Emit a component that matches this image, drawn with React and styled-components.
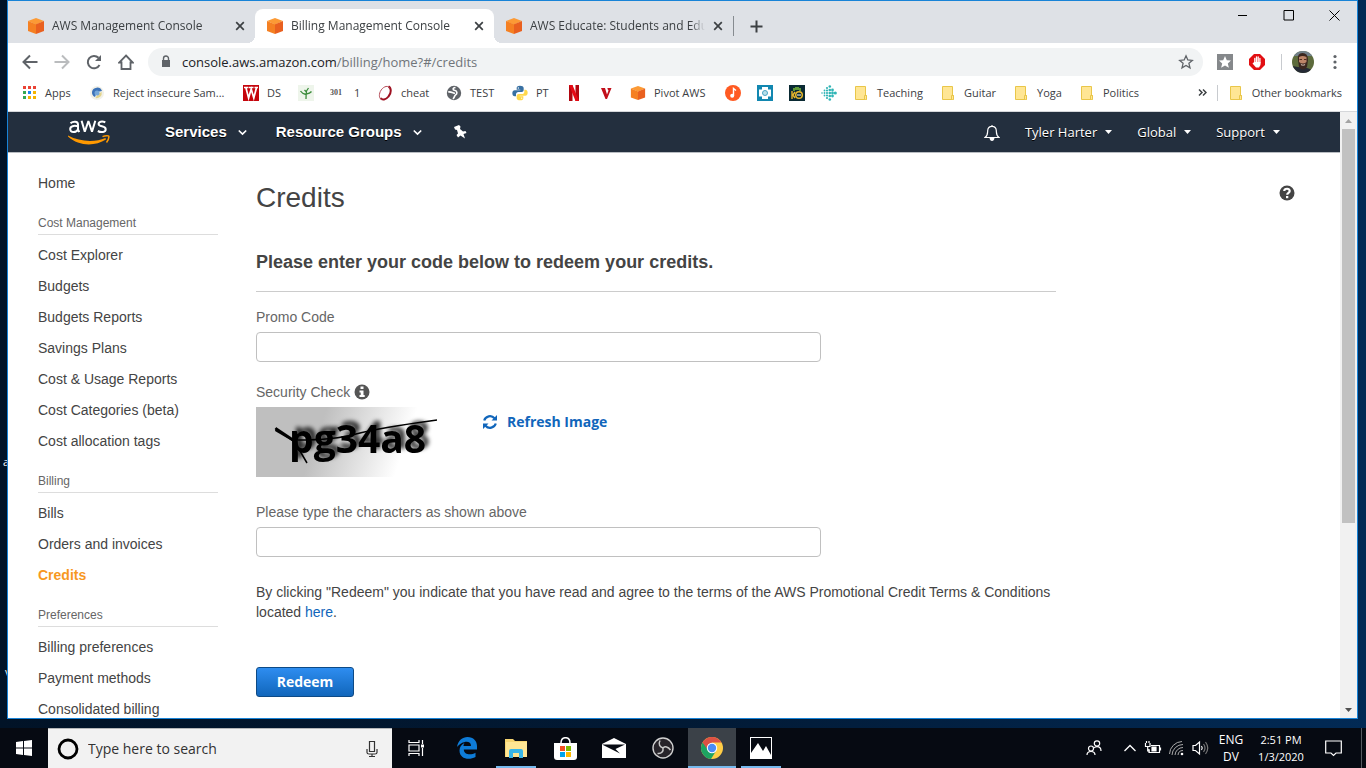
import React from 'react';
import styled, { createGlobalStyle } from 'styled-components';

const ui = '"Open Sans", "Noto Sans", sans-serif';
const arial = '"Liberation Sans", Arial, sans-serif';

const Global = createGlobalStyle`
  *, *::before, *::after { box-sizing: border-box; }
  body { margin: 0; font-family: ${arial}; color: #444; }
  button { border: 0; background: none; padding: 0; font: inherit; color: inherit; cursor: pointer; }
  a { color: inherit; text-decoration: none; }
  svg { display: block; flex: none; }
  h1, h2, ul, p { margin: 0; padding: 0; }
  ul { list-style: none; }
`;

const Desktop = styled.div`
  height: 100vh;
  display: flex;
  flex-direction: column;
  position: relative;
  background: linear-gradient(90deg, #011327, #021a35 50%, #022a55 100%);
`;

const DesktopLabel = styled.span`
  position: absolute;
  left: ${p => p.$left}px;
  top: ${p => p.$top}px;
  font: 11px/16px ${ui};
  color: #fff;
`;

const BrowserWindow = styled.section`
  flex: 1;
  min-height: 0;
  margin: 0 8px 9px 7px;
  border: 1px solid #1883d7;
  background: #fff;
  display: flex;
  flex-direction: column;
  position: relative;
`;

const TabStrip = styled.div`
  height: 42px;
  flex: none;
  display: flex;
  align-items: flex-end;
  background: #dee1e6;
  padding-left: 8px;
`;

const Tab = styled.div`
  position: relative;
  width: 239px;
  height: 34px;
  display: flex;
  align-items: center;
  gap: 7px;
  padding: 0 9px 0 11px;
  font: 12px/16px ${ui};
  color: #3c4043;
  border-radius: 8px 8px 0 0;
  background: ${p => (p.$active ? '#fff' : 'transparent')};
  &::before, &::after {
    content: '';
    display: ${p => (p.$active ? 'block' : 'none')};
    position: absolute;
    bottom: 0;
    width: 8px;
    height: 8px;
  }
  &::before { left: -8px; background: radial-gradient(circle at 0 0, #dee1e6 8px, #fff 8px); }
  &::after { right: -8px; background: radial-gradient(circle at 100% 0, #dee1e6 8px, #fff 8px); }
`;

const TabTitle = styled.span`
  flex: 1;
  min-width: 0;
  overflow: hidden;
  white-space: nowrap;
  mask-image: linear-gradient(90deg, #000 calc(100% - 14px), transparent);
`;

const NewTab = styled.button`
  height: 20px;
  margin: 0 0 7px 0;
  padding-left: 16px;
  border-left: 1px solid #868b90;
`;

const WindowButtons = styled.div`
  display: flex;
  align-self: flex-start;
  margin-left: auto;
  button { width: 46px; height: 28px; display: grid; place-items: center; }
`;

const Toolbar = styled.div`
  height: 37px;
  flex: none;
  display: flex;
  align-items: center;
  padding: 0 14px;
  gap: 16px;
  color: #5f6368;
`;

const Address = styled.div`
  flex: 1;
  height: 28px;
  margin: 0 -2px;
  border-radius: 14px;
  background: #f1f3f4;
  display: flex;
  align-items: center;
  gap: 8px;
  padding: 0 9px 0 10px;
  font: 13px/20px ${ui};
  color: #202124;
  span { flex: 1; }
  i { font-style: normal; color: #70757a; }
  button { color: #5f6368; }
`;

const Profile = styled.div`
  display: flex;
  align-items: center;
  gap: 13px;
  margin-left: -6px;
`;

const Divider = styled.span`
  width: 1px;
  height: 16px;
  background: #c8cbcf;
`;

const Bookmarks = styled.nav`
  height: 32px;
  flex: none;
  display: flex;
  align-items: center;
  padding: 0 15px 6px 13px;
  border-bottom: 1px solid #d5d7da;
  font: 11px/16px ${ui};
  color: #3c4043;
`;

const Bookmark = styled.a`
  flex: none;
  width: ${p => (p.$width ? p.$width + 'px' : 'auto')};
  display: flex;
  align-items: center;
  gap: 8px;
  white-space: nowrap;
`;

const More = styled.button`
  margin-left: auto;
  margin-right: 10px;
`;

const OtherBookmarks = styled(Bookmark)`
  border-left: 1px solid #c8cbcf;
  padding-left: 10px;
`;

const Viewport = styled.div`
  flex: 1;
  min-height: 0;
  display: flex;
`;

const Page = styled.div`
  flex: 1;
  min-width: 0;
  overflow: hidden;
`;

const Scrollbar = styled.div`
  width: 17px;
  display: flex;
  flex-direction: column;
  align-items: center;
  justify-content: space-between;
  background: #f1f1f1;
  button { height: 17px; display: grid; place-items: center; }
`;

const Thumb = styled.div`
  width: 13px;
  flex: 0 0 65%;
  margin-bottom: auto;
  background: #c1c1c1;
`;

const ConsoleNav = styled.header`
  height: 41px;
  display: flex;
  align-items: center;
  padding: 0 60px;
  background: #232f3e;
  border-bottom: 1px solid #b9bdc2;
  color: #fff;
`;

const Logo = styled.a`
  margin-right: 55px;
`;

const MainMenu = styled.button`
  display: flex;
  align-items: center;
  gap: 11px;
  margin-right: 29px;
  font: bold 15px/20px ${arial};
  text-shadow: 0 1px 0 #000;
`;

const UserMenus = styled.div`
  margin-left: auto;
  display: flex;
  align-items: center;
  gap: 25px;
`;

const UserMenu = styled.button`
  display: flex;
  align-items: center;
  gap: 8px;
  font: 500 13px/20px ${ui};
  text-shadow: 0 1px 0 #000;
`;

const Layout = styled.div`
  display: flex;
  padding: 20px 45px 0 30px;
  gap: 38px;
`;

const Sidebar = styled.nav`
  width: 180px;
  flex: none;
  font-size: 14px;
  line-height: 21px;
`;

const SideLink = styled.a`
  display: block;
  margin-bottom: 10px;
  color: ${p => (p.$active ? '#f7981f' : '#444')};
  font-weight: ${p => (p.$active ? 'bold' : 'normal')};
`;

const SideHeading = styled.h2`
  margin: 19px 0 10px;
  padding-bottom: 1px;
  border-bottom: 1px solid #ddd;
  font-size: 12px;
  font-weight: normal;
  line-height: 20px;
  color: #666;
`;

const Main = styled.main`
  flex: 1;
  max-width: 800px;
  padding-top: 8px;
  font-size: 14px;
  line-height: 20px;
`;

const Title = styled.h1`
  font-size: 28px;
  font-weight: normal;
  line-height: 34px;
`;

const Prompt = styled.h2`
  margin: 36px 0 15px;
  padding-bottom: 17px;
  border-bottom: 1px solid #ccc;
  font-size: 18px;
  line-height: 23px;
`;

const Label = styled.label`
  display: flex;
  align-items: center;
  gap: 4px;
  margin-bottom: 5px;
  color: #666;
`;

const TextInput = styled.input`
  display: block;
  width: 565px;
  max-width: 100%;
  height: 30px;
  margin-bottom: 20px;
  padding: 0 8px;
  border: 1px solid #c0c0c0;
  border-radius: 4px;
  background: #fff;
  font: 14px/20px ${arial};
`;

const CaptchaRow = styled.div`
  display: flex;
  align-items: flex-start;
  gap: 27px;
  margin-bottom: 25px;
`;

const Refresh = styled.button`
  display: flex;
  align-items: center;
  gap: 10px;
  margin-top: 5px;
  font: bold 14px/20px ${ui};
  color: #1166bb;
`;

const Terms = styled.p`
  margin-top: 25px;
  a { color: #1166bb; }
`;

const Redeem = styled.button`
  width: 98px;
  height: 30px;
  margin-top: 45px;
  border: 1px solid #0d4a86;
  border-radius: 3px;
  background: linear-gradient(#2e8df0, #1166bb);
  font: bold 14px/20px ${ui};
  color: #fff;
`;

const Help = styled.button`
  margin: 12px 0 0 auto;
  align-self: flex-start;
`;

const Taskbar = styled.footer`
  height: 40px;
  flex: none;
  display: flex;
  align-items: stretch;
  background: #060a12;
  color: #fff;
  font-family: ${ui};
`;

const TaskButton = styled.button`
  width: 48px;
  display: grid;
  place-items: center;
  background: ${p => (p.$active ? '#3b4148' : 'transparent')};
  position: relative;
  &::after {
    content: '';
    display: ${p => (p.$running ? 'block' : 'none')};
    position: absolute;
    inset: ${p => (p.$active ? 'auto 0 0' : 'auto 4px 0')};
    height: 2px;
    background: #76b9ed;
  }
`;

const PinnedApps = styled.div`
  display: flex;
  gap: 1px;
  margin-left: 3px;
`;

const Search = styled.label`
  width: 344px;
  display: flex;
  align-items: center;
  gap: 9px;
  padding: 0 12px 0 9px;
  background: #f2f2f2;
  border-top: 1px solid #b4b6b8;
  color: #333;
  input {
    flex: 1;
    min-width: 0;
    padding: 0;
    border: 0;
    outline: 0;
    background: none;
    font: 14px/20px ${ui};
  }
  input::placeholder { color: #333; opacity: 1; }
`;

const Tray = styled.div`
  margin-left: auto;
  display: flex;
  align-items: center;
  border-right: 1px solid #555a60;
  margin-right: 4px;
  padding-right: 19px;
`;

const TrayIcons = styled.div`
  display: flex;
  align-items: center;
  gap: 7px;
  margin-left: 21px;
`;

const TrayText = styled.div`
  width: ${p => p.$width}px;
  text-align: center;
  font-size: ${p => (p.$clock ? 11 : 12)}px;
  margin-right: ${p => (p.$clock ? 16 : 0)}px;
  line-height: 17px;
  white-space: nowrap;
`;

const Cube = ({ size = 18 }) => (
  <svg width={size} height={size} viewBox="0 0 18 18">
    <path d="M9 1 17 4 9 7.5 1 4Z" fill="#fc9a35" />
    <path d="M1 4 9 7.2V17L1 14Z" fill="#f58022" />
    <path d="M17 4 9 7.2V17L17 14Z" fill="#e9601f" />
  </svg>
);

const Stroke = ({ size = 16, d, w = 1, box = 16, color = 'currentColor' }) => (
  <svg width={size} height={size} viewBox={`0 0 ${box} ${box}`} fill="none" stroke={color} strokeWidth={w}>
    <path d={d} />
  </svg>
);

const Close = () => <Stroke size={12} box={12} w={1.7} d="M2.200 2.200 9.800 9.800M9.800 2.200 2.200 9.800" color="#3c4043" />;
const Chevron = () => <Stroke size={9} box={9} w={1.7} d="M.8 2.5 4.5 6 8.2 2.5" />;
const Caret = () => (
  <svg width="7" height="5" viewBox="0 0 7 5"><path d="M0 0H7L3.500 4Z" fill="currentColor" /></svg>
);

const Folder = () => (
  <svg width="16" height="16" viewBox="0 0 16 16">
    <path d="M2.5 1.5H12.5V10.5H13.5V14.5H2.5Z" fill="#ffe694" stroke="#e9c649" />
    <path d="M11.5 14V10.5H13.5V14.5" fill="#ffe694" stroke="#e9c649" />
  </svg>
);

const AppsIcon = () => {
  const colors = ['#ea4335', '#ea4335', '#ea4335', '#34a853', '#1a86f2', '#f4b400', '#34a853', '#f4b400', '#f4b400'];
  return (
    <svg width="16" height="16" viewBox="0 0 16 16">
      {colors.map((c, i) => <rect key={i} x={2 + (i % 3) * 5} y={1 + Math.floor(i / 3) * 5} width="3" height="3" fill={c} />)}
    </svg>
  );
};

const CanaryIcon = () => (
  <svg width="16" height="16" viewBox="0 0 16 16">
    <circle cx="8" cy="8" r="7" fill="#f2f1e8" />
    <path d="M3 7A5.2 5.2 0 0 1 13 6L8 7 6 12A5.2 5.2 0 0 1 3 7Z" fill="#3b72b8" />
    <path d="M12.7 7A5.2 5.2 0 0 1 6.4 13L9 9Z" fill="#e3d48c" />
    <circle cx="8" cy="8" r="2.5" fill="#75a7d8" />
  </svg>
);

const WIcon = () => (
  <svg width="16" height="16" viewBox="0 0 16 16">
    <path d="M0 0H16V16H0Z" fill="#c5050c" />
    <path d="M1 2.5H5.5M6 2.5H10.5M11.5 2.5H15M3 3 5.6 13 8.2 4 10.8 13 13.4 3" fill="none" stroke="#fff" strokeWidth="1.7" />
  </svg>
);

const PlantIcon = () => (
  <svg width="16" height="16" viewBox="0 0 16 16">
    <path d="M0 0H16V16H0Z" fill="#eef5eb" />
    <path d="M8 14Q8 10 8.500 6M8 9.500Q4 8.500 2.500 6M8.200 9Q12 8.500 13.500 6.500M8.500 7 6.500 5M8.500 6 10.500 3" fill="none" stroke="#3c8c3c" strokeWidth="1.3" />
  </svg>
);

const RingIcon = () => (
  <svg width="16" height="16" viewBox="0 0 16 16" fill="none">
    <path d="M11.5 1.500C14.500 3 14.500 8 11.500 11.500C9 14.800 5 15.500 3.500 13" stroke="#9e1020" strokeWidth="2" />
    <path d="M12.500 2.500C10 0 5.500 2 3.300 6.500C1.500 10.500 2.500 14 5 14.500" stroke="#b44b57" strokeWidth="1" />
  </svg>
);

const GlobeIcon = () => (
  <svg width="16" height="16" viewBox="0 0 16 16">
    <circle cx="8" cy="8" r="7.2" fill="#5f6368" />
    <path d="M2.200 7C5 6.500 7 8 9 8.300M9.500 2.500C6 3 7 5 8.500 5.300 11.500 5.800 11.500 9 9.500 10 8.500 10.500 8.500 12.500 7 14" fill="none" stroke="#fff" strokeWidth="1.600" />
  </svg>
);

const PythonIcon = () => (
  <svg width="16" height="16" viewBox="0 0 24 24">
    <path d="M12 1c-4 0-5 1.500-5 3.500V7h5.500v1H4C2 8 .5 9.500.5 12.500S2 17 4 17h2v-3c0-2 1.500-3.500 3.500-3.500h5c1.800 0 3-1.200 3-3v-3C17.500 2 15 1 12 1Z" fill="#3870a2" />
    <path d="M12 23c4 0 5-1.500 5-3.500V17h-5.500v-1H20c2 0 3.500-1.500 3.500-4.500S22 7 20 7h-1.500v3c0 2-1.500 3.500-3.500 3.500h-5c-1.800 0-3 1.200-3 3v3C7 22 9 23 12 23Z" fill="#ffd84a" />
    <circle cx="9.500" cy="4.500" r="1" fill="#fff" /><circle cx="14.500" cy="19.800" r="1" fill="#fff" />
  </svg>
);

const NetIcon = () => (
  <svg width="16" height="16" viewBox="0 0 16 16">
    <path d="M3 0H6.500V16H3ZM9.500 0H13V16H9.500Z" fill="#b1060f" /><path d="M3 0H6.500L13 16H9.500Z" fill="#e50914" />
  </svg>
);

const VIcon = () => (
  <svg width="16" height="16" viewBox="0 0 16 16">
    <path d="M3 3H7L9 9.500 10.500 5.500 9.500 4V3H13.500L9 14H7.500Z" fill="#c20f1b" />
  </svg>
);

const MusicIcon = () => (
  <svg width="16" height="16" viewBox="0 0 16 16">
    <circle cx="8" cy="8" r="8" fill="#ff5a22" />
    <path d="M8.500 10.500V3.500L11 5.500" fill="none" stroke="#fff" strokeWidth="1.400" /><circle cx="7.200" cy="10.700" r="2" fill="#fff" />
  </svg>
);

const CrossIcon = () => (
  <svg width="16" height="16" viewBox="0 0 16 16">
    <path d="M0 0H16V16H0Z" fill="#1287b0" />
    <path d="M5 2H11V4.500H14V11.500H11V14H5V11.500H2V4.500H5Z" fill="#fff" />
    <circle cx="8" cy="8" r="2.500" fill="#b8dfea" stroke="#4aa5c3" />
  </svg>
);

const BadgeIcon = () => (
  <svg width="16" height="16" viewBox="0 0 16 16">
    <path d="M0 0H16V16H0Z" fill="#0a2a33" />
    <path d="M5 6V3M7 5V2M9 5V2M11 6V3" stroke="#7cbf3a" strokeWidth="1.500" />
    <path d="M3 6V14M4 10 6 7M4 10 6 13" stroke="#e8b62b" strokeWidth="1.400" fill="none" />
    <circle cx="10" cy="10" r="3.300" fill="none" stroke="#e8b62b" strokeWidth="1.500" /><path d="M8 10H12" stroke="#fff" />
  </svg>
);

const dotColumns = [
  [1, 0.8, [8]],
  [3.5, 0.9, [5.5, 8, 10.5]],
  [6, 1.1, [3, 5.5, 8, 10.5, 13]],
  [8.8, 1.3, [1.5, 5, 8, 11, 14.5]],
  [11.5, 1.4, [5, 8, 11]],
  [14.3, 1.6, [8]],
];

const DotsIcon = () => (
  <svg width="16" height="16" viewBox="0 0 16 16" fill="#30b5b6">
    {dotColumns.map(([x, r, ys]) => ys.map(y => <circle key={x + '-' + y} cx={x} cy={y} r={r} />))}
  </svg>
);

const Num = styled.span`
  font: bold 8px/16px "Liberation Serif", serif;
  width: 16px;
  color: #555;
`;

const bookmarks = [
  [<AppsIcon />, 'Apps', 68],
  [<CanaryIcon />, 'Reject insecure Sam...', 154],
  [<WIcon />, 'DS', 55],
  [<PlantIcon />, '', 32],
  [<Num>301</Num>, '1', 47],
  [<RingIcon />, 'cheat', 69],
  [<GlobeIcon />, 'TEST', 66],
  [<PythonIcon />, 'PT', 54],
  [<NetIcon />, '', 32],
  [<VIcon />, '', 32],
  [<Cube size={16} />, 'Pivot AWS', 95],
  [<MusicIcon />, '', 32],
  [<CrossIcon />, '', 32],
  [<BadgeIcon />, '', 32],
  [<DotsIcon />, '', 32],
  [<Folder />, 'Teaching', 87],
  [<Folder />, 'Guitar', 73],
  [<Folder />, 'Yoga', 66],
  [<Folder />, 'Politics', 76],
];

const AwsLogo = () => (
  <svg width="42" height="27" viewBox="0 0 42 27" fill="none">
    <g stroke="#fff" strokeWidth="2">
      <path d="M2.500 4.200C5 2.200 10 1.800 10 5.500V10.500L11.200 13.200M10 7.300C6 6.300 2 7 2.200 10.300 2.500 14 8 14 10 10.500" />
      <path d="M13.600 1.800 16.800 12.800 20.400 2 24 12.800 27.300 1.800" strokeLinejoin="bevel" />
      <path d="M37.300 3.200C34 1.900 30.600 2.500 30.600 4.900 30.600 8.300 37.700 6.300 37.700 10.200 37.700 13.500 33 13.700 29.800 12" />
    </g>
    <path d="M0 16.500C12 23 27 23.500 37.500 19L38 20.500C27 27.500 11 27.500 0 17.500Z" fill="#f90" />
    <path d="M34.500 17.600C37.500 16.500 40.500 16.600 40.800 17.200 41 18.500 40.200 21.500 38.500 23.500" stroke="#f90" strokeWidth="1.500" />
  </svg>
);

const Captcha = () => (
  <svg width="200" height="70" viewBox="0 0 200 70" role="img" aria-label="Security check characters">
    <defs>
      <linearGradient id="fade" x1="0" y1="0" x2="1" y2="0.12">
        <stop offset="0.35" stopColor="#bfbfbf" /><stop offset="0.8" stopColor="#fff" />
      </linearGradient>
      <filter id="soft" x="-10%" y="-20%" width="120%" height="140%">
        <feDropShadow dx="4" dy="-4" stdDeviation="2" floodColor="#000" floodOpacity="0.8" />
      </filter>
    </defs>
    <path d="M0 0H200V70H0Z" fill="url(#fade)" />
    <text x="33" y="46" fill="#000" fontFamily='"Open Sans", sans-serif' fontWeight="bold" fontSize="39" filter="url(#soft)">pg34a8</text>
    <path d="M19 21.500 37 34 44 44 51 56" fill="none" stroke="#000" strokeWidth="1.500" />
    <path d="M20 20 38 32 36 34 19 24Z" fill="#000" />
    <path d="M42 33Q78 33 100 27T181 13" fill="none" stroke="#000" strokeWidth="1.500" />
  </svg>
);

const RefreshIcon = () => (
  <svg width="14" height="14" viewBox="0 0 14 14" fill="none" stroke="#1166bb" strokeWidth="2.200">
    <path d="M1.200 5.500A6 6 0 0 1 11.500 3.300M12.800 8.500A6 6 0 0 1 2.500 10.700" />
    <path d="M14 0V5.500H8.500ZM0 14V8.500H5.500Z" fill="#1166bb" stroke="none" />
  </svg>
);

const InfoIcon = () => (
  <svg width="16" height="16" viewBox="0 0 16 16">
    <circle cx="8" cy="8" r="7.500" fill="#555" />
    <path d="M6.500 2.500H9.500V5H6.500ZM5.500 6.500H9.500V11H10.700V13H5.500V11H6.700V8.500H5.500Z" fill="#fff" />
  </svg>
);

const HelpIcon = () => (
  <svg width="16" height="16" viewBox="0 0 16 16">
    <circle cx="8" cy="8" r="7.500" fill="#444" />
    <path d="M5.200 6C5.500 3 10.800 3 10.700 6 10.600 8 8.200 7.600 8.200 9.800" fill="none" stroke="#fff" strokeWidth="2.200" />
    <path d="M7 11H9.300V13.200H7Z" fill="#fff" />
  </svg>
);

const Avatar = () => (
  <svg width="22" height="22" viewBox="0 0 22 22">
    <defs><clipPath id="face"><circle cx="11" cy="11" r="11" /></clipPath></defs>
    <g clipPath="url(#face)">
      <path d="M0 0H22V22H0Z" fill="#5d6b3c" /><path d="M0 0H22V5H0Z" fill="#71808a" />
      <path d="M0 22V15L6 16 15 17Q20 18 21 22Z" fill="#252a35" />
      <path d="M6 9Q5 2 10.500 2T16 9L15 16Q11 21 7 16Z" fill="#3b261e" />
      <path d="M7 6Q10.500 4 14.500 6V11Q11 14 7 11Z" fill="#bd8568" />
      <path d="M8.500 12.500Q11 15 13.500 12.500L12.500 14.500H9.500Z" fill="#ecd6cb" />
      <path d="M7.500 8.500H10M12 8.500H14.500" stroke="#4d2e22" />
    </g>
  </svg>
);

const sections = [
  ['Cost Management', ['Cost Explorer', 'Budgets', 'Budgets Reports', 'Savings Plans', 'Cost & Usage Reports', 'Cost Categories (beta)', 'Cost allocation tags']],
  ['Billing', ['Bills', 'Orders and invoices', 'Credits']],
  ['Preferences', ['Billing preferences', 'Payment methods', 'Consolidated billing']],
];

const tabs = ['AWS Management Console', 'Billing Management Console', 'AWS Educate: Students and Educators'];

export default function App() {
  return (
    <Desktop>
      <Global />
      <DesktopLabel $left={3} $top={454}>a</DesktopLabel>
      <DesktopLabel $left={5} $top={664}>v</DesktopLabel>
      <BrowserWindow>
        <TabStrip>
          {tabs.map((t, i) => (
            <Tab key={t} $active={i === 1}>
              <Cube />
              <TabTitle>{t}</TabTitle>
              <button aria-label="Close tab"><Close /></button>
            </Tab>
          ))}
          <NewTab aria-label="New tab"><Stroke size={13} box={13} w={2} d="M6.500.500V12.500M.500 6.500H12.500" color="#3c4043" /></NewTab>
          <WindowButtons>
            <button aria-label="Minimize"><Stroke size={11} box={11} d="M1 5.500H10" color="#000" /></button>
            <button aria-label="Maximize"><Stroke size={11} box={11} d="M1 .5H10.500V10H1Z" color="#000" /></button>
            <button aria-label="Close"><Stroke size={11} box={11} d="M.5.500 10.500 10.500M10.500.500.500 10.500" color="#000" /></button>
          </WindowButtons>
        </TabStrip>
        <Toolbar>
          <button aria-label="Back"><Stroke w={2} d="M15.500 8H2M8 1.500 1.500 8 8 14.500" /></button>
          <button aria-label="Forward"><Stroke w={2} d="M.5 8H14M8 1.500 14.500 8 8 14.500" color="#babcbe" /></button>
          <button aria-label="Reload">
            <svg width="16" height="16" viewBox="0 0 16 16">
              <path d="M13.500 11A6.200 6.200 0 1 1 12.500 3.800" fill="none" stroke="#5f6368" strokeWidth="2" />
              <path d="M15 1V7H9Z" fill="#5f6368" />
            </svg>
          </button>
          <button aria-label="Home page"><Stroke w={1.8} d="M8 1.500 14.800 8.500H12.500V15H3.500V8.500H1.200Z" /></button>
          <Address>
            <svg width="16" height="16" viewBox="0 0 16 16">
              <path d="M4 6H12V13H4Z" fill="#5f6368" /><path d="M5.500 6.500V4.500A2.500 2.500 0 0 1 10.500 4.500V6.500" fill="none" stroke="#5f6368" strokeWidth="1.400" />
            </svg>
            <span>console.aws.amazon.com<i>/billing/home?#/credits</i></span>
            <button aria-label="Bookmark this page"><Stroke size={16} w={1.3} d="M8 1.800 9.800 6 14.300 6.400 10.900 9.300 12 13.800 8 11.400 4 13.800 5.100 9.300 1.700 6.400 6.200 6Z" /></button>
          </Address>
          <button aria-label="Extension">
            <svg width="16" height="16" viewBox="0 0 16 16"><path d="M0 0H16V16H0Z" fill="#85888b" /><path d="M8 2 9.800 6.200 14 6.500 10.800 9.400 11.900 13.800 8 11.400 4.100 13.800 5.200 9.400 2 6.500 6.200 6.200Z" fill="#fff" /></svg>
          </button>
          <button aria-label="Ad blocker">
            <svg width="16" height="16" viewBox="0 0 16 16"><path d="M5 0H11L16 5V11L11 16H5L0 11V5Z" fill="#e20f13" /><path d="M5.800 9V4.500M7.500 8V3M9.200 8V3M10.900 9V4.500" stroke="#fff" strokeWidth="1.300" strokeLinecap="round" /><path d="M5.200 8H11.500V11L10 13.500H7L3.500 9.500Z" fill="#fff" /></svg>
          </button>
          <Divider />
          <Profile>
            <Avatar />
            <button aria-label="Browser menu">
              <svg width="16" height="16" viewBox="0 0 16 16" fill="#5f6368"><circle cx="8" cy="2.500" r="1.600" /><circle cx="8" cy="8" r="1.600" /><circle cx="8" cy="13.500" r="1.600" /></svg>
            </button>
          </Profile>
        </Toolbar>
        <Bookmarks>
          {bookmarks.map(([icon, text, width], i) => (
            <Bookmark key={i} href="#" $width={width} aria-label={text || 'Bookmark'}>{icon}{text}</Bookmark>
          ))}
          <More aria-label="More bookmarks"><Stroke size={9} box={9} w={1.5} d="M1 1.500 4 4.500 1 7.500M5 1.500 8 4.500 5 7.500" /></More>
          <OtherBookmarks href="#"><Folder />Other bookmarks</OtherBookmarks>
        </Bookmarks>
        <Viewport>
          <Page>
            <ConsoleNav>
              <Logo href="#" aria-label="AWS"><AwsLogo /></Logo>
              <MainMenu>Services<Chevron /></MainMenu>
              <MainMenu>Resource Groups<Chevron /></MainMenu>
              <button aria-label="Pin shortcuts">
                <svg width="18" height="18" viewBox="0 0 18 18" fill="#fff"><path d="M3 4 8 2 9.500 3.500 9 6 12 8.500 14.500 8 15.500 10 12.500 11 14 15.500 9.500 12.500 7 14.500 5.500 12 7 10.500 6 7 4 6.500Z" /></svg>
              </button>
              <UserMenus>
                <button aria-label="Notifications">
                  <svg width="16" height="17" viewBox="0 0 16 17"><path d="M8 1V2M1 13.500C4 11.500 3.500 9 3.700 6.500 4 1 12 1 12.300 6.500 12.500 9 12 11.500 15 13.500Z" fill="none" stroke="#fff" strokeWidth="1.200" /><path d="M5.500 14H10.500Q10 17 8 17T5.500 14Z" fill="#fff" /></svg>
                </button>
                <UserMenu>Tyler Harter<Caret /></UserMenu>
                <UserMenu>Global<Caret /></UserMenu>
                <UserMenu>Support<Caret /></UserMenu>
              </UserMenus>
            </ConsoleNav>
            <Layout>
              <Sidebar>
                <SideLink href="#">Home</SideLink>
                {sections.map(([name, links]) => (
                  <div key={name}>
                    <SideHeading>{name}</SideHeading>
                    {links.map(l => <SideLink key={l} href="#" $active={l === 'Credits'}>{l}</SideLink>)}
                  </div>
                ))}
              </Sidebar>
              <Main>
                <Title>Credits</Title>
                <Prompt>Please enter your code below to redeem your credits.</Prompt>
                <Label htmlFor="promo">Promo Code</Label>
                <TextInput id="promo" />
                <Label as="div">Security Check <InfoIcon /></Label>
                <CaptchaRow>
                  <Captcha />
                  <Refresh><RefreshIcon />Refresh Image</Refresh>
                </CaptchaRow>
                <Label htmlFor="chars">Please type the characters as shown above</Label>
                <TextInput id="chars" />
                <Terms>
                  By clicking "Redeem" you indicate that you have read and agree to the terms of the AWS Promotional Credit Terms &amp; Conditions located <a href="#">here</a>.
                </Terms>
                <Redeem>Redeem</Redeem>
              </Main>
              <Help aria-label="Help"><HelpIcon /></Help>
            </Layout>
          </Page>
          <Scrollbar>
            <button aria-label="Scroll up"><svg width="7" height="4" viewBox="0 0 7 4"><path d="M0 4H7L3.500 0Z" fill="#a3a3a3" /></svg></button>
            <Thumb />
            <button aria-label="Scroll down"><svg width="7" height="4" viewBox="0 0 7 4"><path d="M0 0H7L3.500 4Z" fill="#505050" /></svg></button>
          </Scrollbar>
        </Viewport>
      </BrowserWindow>
      <Taskbar>
        <TaskButton aria-label="Start">
          <svg width="16" height="16" viewBox="0 0 16 16" fill="#fff"><path d="M0 2 7 1V7.500H0ZM8 1 16 0V7.500H8ZM0 8.500H7V15L0 14ZM8 8.500H16V16L8 15Z" /></svg>
        </TaskButton>
        <Search>
          <svg width="22" height="22" viewBox="0 0 22 22"><circle cx="11" cy="11" r="9" fill="none" stroke="#000" strokeWidth="2.800" /></svg>
          <input placeholder="Type here to search" aria-label="Search" />
          <svg width="16" height="18" viewBox="0 0 16 18" fill="none" stroke="#333" strokeWidth="1.200"><path d="M5.500 1.500H10.500V11.500H5.500ZM3 9V12.500Q3 14 5 14H11Q13 14 13 12.500V9M8 14V16.500M5 16.500H11" /></svg>
        </Search>
        <TaskButton aria-label="Task view">
          <svg width="17" height="16" viewBox="0 0 17 16" fill="none" stroke="#fff" strokeWidth="1.200"><path d="M1 0V2.500H11V0M1 16V13.500H11V16M1 5H11V11H1ZM14.500 0V4M14.500 8V16" /><path d="M13 4.500H16V7.500H13Z" fill="#fff" stroke="none" /></svg>
        </TaskButton>
        <PinnedApps>
          <TaskButton aria-label="Edge">
            <svg width="22" height="22" viewBox="0 0 22 22"><path d="M1 10C2 3.500 6.500 0 11.500 0 17.500 0 21 4 21 9V12.500H7.800C8 18 15 18.500 19.500 15.700V20C13 23.500 3.500 22 3.500 13.500 3.500 10 5.500 7.500 8.500 6 7.500 7.500 7.500 8.500 7.500 9H15C15 2 5 4.500 1 10Z" fill="#0e7cd8" /></svg>
          </TaskButton>
          <TaskButton $running aria-label="File Explorer">
            <svg width="22" height="19" viewBox="0 0 22 19"><path d="M0 0H8L10 2H22V18H0Z" fill="#f7d571" /><path d="M1 3H22V18H1Z" fill="#ffe694" /><path d="M4 19V12Q4 10 6 10H16Q18 10 18 12V19H14V14H8V19Z" fill="#38b6e8" /></svg>
          </TaskButton>
          <TaskButton aria-label="Store">
            <svg width="24" height="23" viewBox="0 0 24 23"><path d="M1 6H24V20Q24 23 21 23H4Q1 23 1 20Z" fill="#fff" /><path d="M8 6Q8 .700 12.500.700T17 6" fill="none" stroke="#fff" strokeWidth="1.500" /><path d="M7 9H12V14H7Z" fill="#f25022" /><path d="M13 9H18V14H13Z" fill="#7fba00" /><path d="M7 15H12V20H7Z" fill="#00a4ef" /><path d="M13 15H18V20H13Z" fill="#ffb900" /></svg>
          </TaskButton>
          <TaskButton aria-label="Mail">
            <svg width="24" height="20" viewBox="0 0 24 20"><path d="M0 6 12 0 24 6V20H0Z" fill="#fff" /><path d="M0 6.500H23L13.500 11 18 15.500Z" fill="#060a12" /></svg>
          </TaskButton>
          <TaskButton aria-label="OBS">
            <svg width="22" height="22" viewBox="0 0 22 22" fill="none"><circle cx="11" cy="11" r="10" fill="#27242a" stroke="#d0d0d0" strokeWidth="1.400" /><path d="M8 3.500C6 7.500 8 10 11 11M18.500 13C16 9.500 13 9 11 11M5.500 16.500C10 17 11.500 14 11 11" stroke="#c8c8c8" strokeWidth="1.500" /></svg>
          </TaskButton>
          <TaskButton $running $active aria-label="Chrome">
            <svg width="22" height="22" viewBox="0 0 22 22"><circle cx="11" cy="11" r="11" fill="#ffcd46" /><path d="M11 11 1.500 5.500A11 11 0 0 0 10 22L15 14Z" fill="#1da462" /><path d="M1.500 5.500A11 11 0 0 1 20.500 5.500H11L7 13Z" fill="#dd5144" /><circle cx="11" cy="11" r="5.200" fill="#fff" /><circle cx="11" cy="11" r="4.200" fill="#4c8bf5" /></svg>
          </TaskButton>
          <TaskButton $running aria-label="Photos">
            <svg width="22" height="22" viewBox="0 0 22 22"><path d="M0 0H22V22H0Z" fill="#fff" /><path d="M1 1H21V18L16 9 13 14 8 6 1 16Z" fill="#060a12" /></svg>
          </TaskButton>
        </PinnedApps>
        <Tray>
          <svg width="16" height="16" viewBox="0 0 16 16" fill="none" stroke="#fff" strokeWidth="1.200"><circle cx="11" cy="3.500" r="2.700" /><circle cx="5" cy="8.500" r="2.500" /><path d="M1 15Q1 11.500 5 11.500T9 15M8 8Q9 6.700 11 6.700 15 6.700 15 11" /></svg>
          <TrayIcons>
            <Stroke size={14} box={14} w={1.300} d="M1.500 10 7 4.500 12.500 10" color="#fff" />
            <svg width="18" height="16" viewBox="0 0 18 16" fill="none" stroke="#fff" strokeWidth="1.200"><path d="M7 5.500H15.500V12.500H5V9M16.500 7.500V10.500M1.500 3V6.500H6V3M2.500 3V1M5 3V1M3.700 6.500V11H6" /><path d="M8 7H12V11H8Z" fill="#fff" /></svg>
            <svg width="16" height="16" viewBox="0 0 16 16" fill="none"><path d="M3 15A11 11 0 0 1 14 4.500M6 15A8 8 0 0 1 14 7.500M9 15A5 5 0 0 1 14 10.500M.5 14A13 13 0 0 1 13 1.500" stroke="#aaa" /><circle cx="13" cy="14" r="1.300" fill="#fff" /></svg>
            <svg width="17" height="16" viewBox="0 0 17 16" fill="none" stroke="#fff" strokeWidth="1.200"><path d="M1 5.500H3.500L7.500 2V14L3.500 10.500H1Z" /><path d="M9.500 6Q11 8 9.500 10" /><path d="M11.500 4Q14.500 8 11.500 12M13.500 2Q18 8 13.500 14" stroke="#777" /></svg>
          </TrayIcons>
          <TrayText $width={44}>ENG<br />DV</TrayText>
          <TrayText $width={56} $clock>2:51 PM<br />1/3/2020</TrayText>
          <svg width="17" height="17" viewBox="0 0 17 17" fill="none" stroke="#fff" strokeWidth="1.200"><path d="M.7 1H16.300V13H11L8.500 15.500 6 13H.7Z" /></svg>
        </Tray>
      </Taskbar>
    </Desktop>
  );
}
